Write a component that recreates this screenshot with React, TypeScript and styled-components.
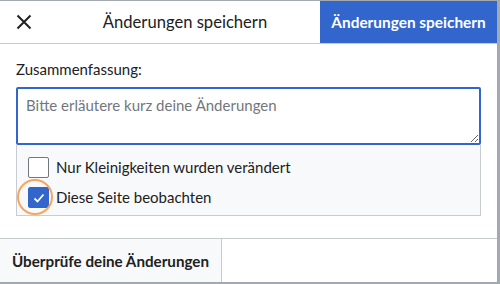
import React from "react";
import styled, { createGlobalStyle } from "styled-components";

const Global = createGlobalStyle`
  html, body { margin: 0; padding: 0; background: #fff; }
  body { font-family: Lato, "Noto Sans", sans-serif; color: #202122; }
  * { box-sizing: border-box; }
`;

const Dialog = styled.div`
  width: 500px;
  height: 284px;
  border-top: 1px solid #a2a9b1;
  border-right: 3px solid #a2a9b1;
  border-bottom: 2px solid #a2a9b1;
  display: flex;
  flex-direction: column;
  background: #fff;
`;

const Header = styled.div`
  height: 43px;
  display: flex;
  align-items: stretch;
  border-bottom: 1px solid #c8ccd1;
`;

const CloseButton = styled.button`
  width: 48px;
  border: none;
  background: transparent;
  padding: 0;
  display: flex;
  align-items: center;
  justify-content: center;
  color: #202122;
`;

const Title = styled.div`
  flex: 1;
  display: flex;
  align-items: center;
  justify-content: center;
  font-size: 16.6px;
  padding-left: 2px;
`;

const PrimaryButton = styled.button`
  width: 177px;
  border: none;
  background: #36c;
  color: #fff;
  font-family: Lato, "Noto Sans", sans-serif;
  font-weight: 700;
  font-size: 15.4px;
  padding: 0;
`;

const Body = styled.div`
  flex: 1;
  padding: 14px 16px 0 16px;
  display: flex;
  flex-direction: column;
`;

const Label = styled.div`
  font-size: 15px;
  line-height: 22px;
  margin-bottom: 7px;
  color: #202122;
`;

const Summary = styled.textarea`
  height: 58px;
  width: 100%;
  border: 2px solid #36c;
  border-radius: 2px;
  padding: 6px 8px;
  font-family: Lato, "Noto Sans", sans-serif;
  font-size: 15px;
  line-height: 20px;
  resize: vertical;
  outline: none;
  display: block;
  &::placeholder { color: #72777d; }
`;

const Options = styled.div`
  background: #f8f9fa;
  border: 1px solid #c8ccd1;
  border-top: none;
  padding: 12px 12px 7px 11px;
  display: flex;
  flex-direction: column;
  gap: 9px;
`;

const OptionRow = styled.label`
  position: relative;
  display: flex;
  align-items: center;
  gap: 7px;
  font-size: 15px;
  line-height: 21px;
  color: #202122;
`;

const Box = styled.span<{ $checked?: boolean }>`
  width: 21px;
  height: 21px;
  border-radius: 2px;
  border: 1px solid ${(p) => (p.$checked ? "#36c" : "#72777d")};
  background: ${(p) => (p.$checked ? "#36c" : "#fff")};
  display: flex;
  align-items: center;
  justify-content: center;
  flex-shrink: 0;
`;

const Highlight = styled.span`
  position: absolute;
  left: -11px;
  top: -8px;
  width: 36px;
  height: 36px;
  border-radius: 50%;
  border: 2px solid #f9a55d;
  pointer-events: none;
`;

const Footer = styled.div`
  height: 44px;
  border-top: 1px solid #c8ccd1;
  display: flex;
`;

const SecondaryButton = styled.button`
  width: 222px;
  border: none;
  border-right: 1px solid #c8ccd1;
  background: #f8f9fa;
  font-family: Lato, "Noto Sans", sans-serif;
  font-weight: 700;
  font-size: 15.2px;
  color: #202122;
  padding: 0;
`;

export default function App() {
  return (
    <>
      <Global />
      <Dialog>
        <Header>
          <CloseButton aria-label="Schließen">
            <svg width="16" height="16" viewBox="0 0 16 16">
              <path d="M1.5 1.5 L14.5 14.5 M14.5 1.5 L1.5 14.5" stroke="#202122" strokeWidth="2" fill="none" />
            </svg>
          </CloseButton>
          <Title>Änderungen speichern</Title>
          <PrimaryButton>Änderungen speichern</PrimaryButton>
        </Header>
        <Body>
          <Label>Zusammenfassung:</Label>
          <Summary placeholder="Bitte erläutere kurz deine Änderungen" />
          <Options>
            <OptionRow>
              <Box />
              Nur Kleinigkeiten wurden verändert
            </OptionRow>
            <OptionRow>
              <Box $checked>
                <svg width="14" height="14" viewBox="0 0 14 14">
                  <path d="M2.5 7.5 L5.5 10.5 L11.5 3.5" stroke="#fff" strokeWidth="1.8" fill="none" />
                </svg>
              </Box>
              Diese Seite beobachten
              <Highlight />
            </OptionRow>
          </Options>
        </Body>
        <Footer>
          <SecondaryButton>Überprüfe deine Änderungen</SecondaryButton>
        </Footer>
      </Dialog>
    </>
  );
}
